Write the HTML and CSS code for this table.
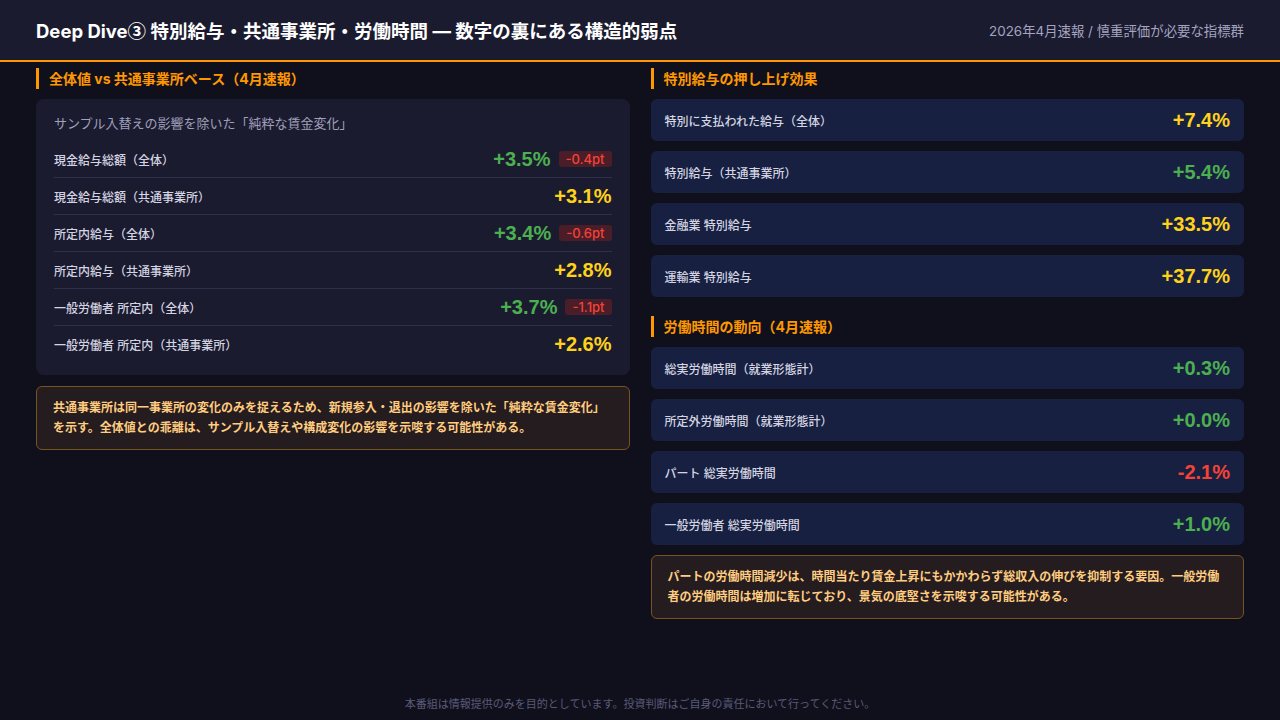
FILE: index.html
```html
<!DOCTYPE html>
<html lang="ja">
<head>
<meta charset="utf-8">
<link rel="stylesheet" href="styles.css">
</head>
<body>
<header class="hdr">
  <h1 class="title">Deep Dive<span class="circ">③</span> 特別給与・共通事業所・労働時間 — 数字の裏にある構造的弱点</h1>
  <div class="sub">2026年4月速報 / 慎重評価が必要な指標群</div>
</header>
<main class="main">
  <section class="col">
    <h2 class="sec">全体値 vs 共通事業所ベース（4月速報）</h2>
    <div class="card">
      <div class="card-sub">サンプル入替えの影響を除いた「純粋な賃金変化」</div>
      <div class="row"><span class="lbl">現金給与総額（全体）</span><span class="vals"><span class="val green">+3.5%</span><span class="badge">-0.4pt</span></span></div>
      <div class="row"><span class="lbl">現金給与総額（共通事業所）</span><span class="vals"><span class="val yellow">+3.1%</span></span></div>
      <div class="row"><span class="lbl">所定内給与（全体）</span><span class="vals"><span class="val green">+3.4%</span><span class="badge">-0.6pt</span></span></div>
      <div class="row"><span class="lbl">所定内給与（共通事業所）</span><span class="vals"><span class="val yellow">+2.8%</span></span></div>
      <div class="row"><span class="lbl">一般労働者 所定内（全体）</span><span class="vals"><span class="val green">+3.7%</span><span class="badge">-1.1pt</span></span></div>
      <div class="row"><span class="lbl">一般労働者 所定内（共通事業所）</span><span class="vals"><span class="val yellow">+2.6%</span></span></div>
    </div>
    <div class="note">共通事業所は同一事業所の変化のみを捉えるため、新規参入・退出の影響を除いた「純粋な賃金変化」を示す。全体値との乖離は、サンプル入替えや構成変化の影響を示唆する可能性がある。</div>
  </section>
  <section class="col">
    <h2 class="sec">特別給与の押し上げ効果</h2>
    <div class="stack">
      <div class="item"><span class="lbl">特別に支払われた給与（全体）</span><span class="val yellow">+7.4%</span></div>
      <div class="item"><span class="lbl">特別給与（共通事業所）</span><span class="val green">+5.4%</span></div>
      <div class="item"><span class="lbl">金融業 特別給与</span><span class="val yellow">+33.5%</span></div>
      <div class="item"><span class="lbl">運輸業 特別給与</span><span class="val yellow">+37.7%</span></div>
    </div>
    <h2 class="sec sec2">労働時間の動向（4月速報）</h2>
    <div class="stack">
      <div class="item"><span class="lbl">総実労働時間（就業形態計）</span><span class="val green">+0.3%</span></div>
      <div class="item"><span class="lbl">所定外労働時間（就業形態計）</span><span class="val green">+0.0%</span></div>
      <div class="item"><span class="lbl">パート 総実労働時間</span><span class="val red">-2.1%</span></div>
      <div class="item"><span class="lbl">一般労働者 総実労働時間</span><span class="val green">+1.0%</span></div>
      <div class="note">パートの労働時間減少は、時間当たり賃金上昇にもかかわらず総収入の伸びを抑制する要因。一般労働者の労働時間は増加に転じており、景気の底堅さを示唆する可能性がある。</div>
    </div>
  </section>
</main>
<footer class="foot">本番組は情報提供のみを目的としています。投資判断はご自身の責任において行ってください。</footer>
</body>
</html>
```

FILE: styles.css
```css
* { box-sizing: border-box; margin: 0; padding: 0; }
html, body { width: 1280px; height: 720px; overflow: hidden; }
body {
  background: #10101d;
  font-family: Inter, "Noto Sans CJK JP", sans-serif;
  color: #d4d4e2;
  display: flex;
  flex-direction: column;
}
.hdr {
  height: 62px;
  background: #1b1b2f;
  border-bottom: 2px solid #ff9800;
  display: flex;
  align-items: center;
  justify-content: space-between;
  padding: 0 36px;
}
.title {
  font-size: 18.5px;
  font-weight: 700;
  color: #ffffff;
}
.circ { font-family: "Noto Sans CJK JP", sans-serif; }
.sub {
  font-size: 13.4px;
  color: #a4a4c0;
}
.main {
  flex: 1;
  display: grid;
  grid-template-columns: 1fr 1fr;
  column-gap: 21px;
  padding: 6px 36px 0;
  align-items: start;
}
.col { display: flex; flex-direction: column; }
.sec {
  font-size: 14px;
  font-weight: 700;
  color: #ff9800;
  border-left: 3px solid #ff9800;
  padding-left: 10px;
  line-height: 21px;
  margin-bottom: 10px;
}
.sec2 { margin-top: 19px; }
.card {
  background: #1b1b2f;
  border-radius: 8px;
  padding: 14px 18px 13px;
}
.card-sub {
  font-size: 13px;
  color: #a0a0bc;
  line-height: 20px;
  margin-bottom: 8px;
}
.row {
  display: flex;
  align-items: center;
  justify-content: space-between;
  height: 37px;
  border-bottom: 1px solid #2f2f4c;
}
.row:last-child { border-bottom: none; height: 36px; }
.lbl { font-size: 12px; color: #d4d4e2; font-weight: 500; }
.vals { display: flex; align-items: center; gap: 8px; }
.val {
  font-family: "Liberation Sans", "Noto Sans CJK JP", sans-serif;
  font-size: 20px;
  font-weight: 700;
}
.green { color: #4caf50; }
.yellow { color: #ffd21a; }
.red { color: #f44336; }
.badge {
  font-size: 13px;
  font-weight: 500;
  color: #f44336;
  background: #4a1d28;
  border-radius: 3px;
  padding: 0 7px;
  line-height: 16px;
  height: 16px;
}
.note {
  margin-top: 11px;
  background: #241c1f;
  border: 1px solid #7a5222;
  border-radius: 6px;
  padding: 11px 16px;
  font-size: 12px;
  font-weight: 700;
  line-height: 20px;
  color: #ffcc80;
}
.stack { display: flex; flex-direction: column; gap: 10px; }
.stack .note { margin-top: 0; }
.item {
  height: 42px;
  background: #172040;
  border-radius: 6px;
  display: flex;
  align-items: center;
  justify-content: space-between;
  padding: 0 14px;
}
.foot {
  text-align: center;
  font-size: 11px;
  color: #5a5a78;
  padding-bottom: 8px;
  line-height: 16px;
}
```
